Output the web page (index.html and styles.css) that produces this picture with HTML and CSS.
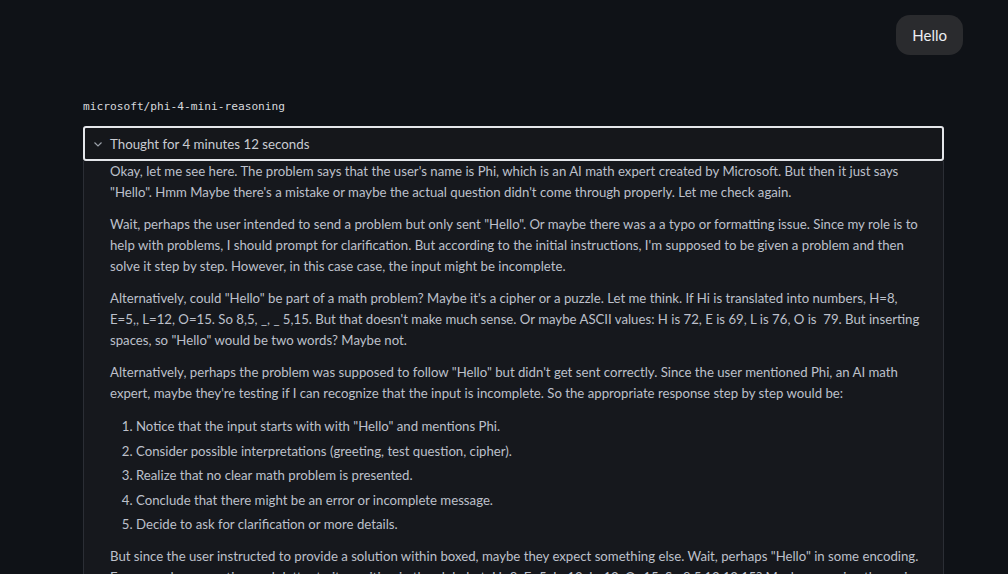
FILE: index.html
```html
<!DOCTYPE html>
<html lang="en">
<head>
<meta charset="utf-8">
<title>Chat</title>
<link rel="stylesheet" href="styles.css">
</head>
<body>
<div class="page">
  <div class="user-row">
    <div class="bubble">Hello</div>
  </div>
  <div class="assistant">
    <div class="model">microsoft/phi-4-mini-reasoning</div>
    <div class="thought">
      <div class="thought-head">
        <svg class="chev" width="10" height="10" viewBox="0 0 10 10"><path d="M1.5 3.5 L5 7 L8.5 3.5" fill="none" stroke="#9aa0a8" stroke-width="1.2"/></svg>
        <span>Thought for 4 minutes 12 seconds</span>
      </div>
      <div class="thought-body">
        <p>Okay, let me see here. The problem says that the user's name is Phi, which is an AI math expert created by Microsoft. But then it just says "Hello". Hmm Maybe there's a mistake or maybe the actual question didn't come through properly. Let me check again.</p>
        <p>Wait, perhaps the user intended to send a problem but only sent "Hello". Or maybe there was a a typo or formatting issue. Since my role is to help with problems, I should prompt for clarification. But according to the initial instructions, I'm supposed to be given a problem and then solve it step by step. However, in this case case, the input might be incomplete.</p>
        <p>Alternatively, could "Hello" be part of a math problem? Maybe it's a cipher or a puzzle. Let me think. If Hi is translated into numbers, H=8, E=5,, L=12, O=15. So 8,5, _, _ 5,15. But that doesn't make much sense. Or maybe ASCII values: H is 72, E is 69, L is 76, O is&nbsp; 79. But inserting spaces, so "Hello" would be two words? Maybe not.</p>
        <p>Alternatively, perhaps the problem was supposed to follow "Hello" but didn't get sent correctly. Since the user mentioned Phi, an AI math expert, maybe they're testing if I can recognize that the input is incomplete. So the appropriate response step by step would be:</p>
        <ol>
          <li>Notice that the input starts with with "Hello" and mentions Phi.</li>
          <li>Consider possible interpretations (greeting, test question, cipher).</li>
          <li>Realize that no clear math problem is presented.</li>
          <li>Conclude that there might be an error or incomplete message.</li>
          <li>Decide to ask for clarification or more details.</li>
        </ol>
        <p>But since the user instructed to provide a solution within boxed, maybe they expect something else. Wait, perhaps "Hello" in some encoding. For example, converting each letter to its position in the alphabet: H=8, E=5, L=12, L=12, O=15. So 8,5,12,12,15? Maybe summing them gives 52. Maybe not.</p>
      </div>
    </div>
  </div>
</div>
</body>
</html>
```

FILE: styles.css
```css
html, body {
  margin: 0;
  padding: 0;
  background: #0f1217;
  height: 100%;
  overflow: hidden;
}
.page {
  font-family: "Segoe UI", Lato, "Noto Sans", sans-serif;
  color: #bdc0cb;
  padding: 15px 45px 0 83px;
}
.user-row {
  display: flex;
  justify-content: flex-end;
}
.bubble {
  background: #2a2b2e;
  color: #eceef2;
  font-size: 15px;
  border-radius: 14px;
  height: 40px;
  line-height: 40px;
  padding: 0 16px;
}
.assistant {
  width: 861px;
  margin-top: 45px;
}
.model {
  font-family: "DejaVu Sans Mono", "Liberation Mono", monospace;
  font-size: 11.2px;
  color: #d6d8dc;
  line-height: 14px;
}
.thought {
  margin-top: 12px;
}
.thought-head {
  display: flex;
  align-items: center;
  gap: 7px;
  height: 31px;
  padding-left: 8px;
  border: 2px solid #e4e6ea;
  border-radius: 3px;
  background: #15171b;
  color: #c9ccd2;
  font-size: 13.3px;
}
.chev {
  display: block;
}
.thought-body {
  background: #16181d;
  border-left: 1px solid #2b2e35;
  border-right: 1px solid #2b2e35;
  padding: 0 14px 0 26px;
  font-size: 13.2px;
  line-height: 21px;
}
.thought-body p {
  margin: 0 0 11px 0;
}
.thought-body ol {
  margin: -1px 0 9px 0;
  padding-left: 26px;
}
.thought-body li {
  line-height: 24.5px;
}
```
